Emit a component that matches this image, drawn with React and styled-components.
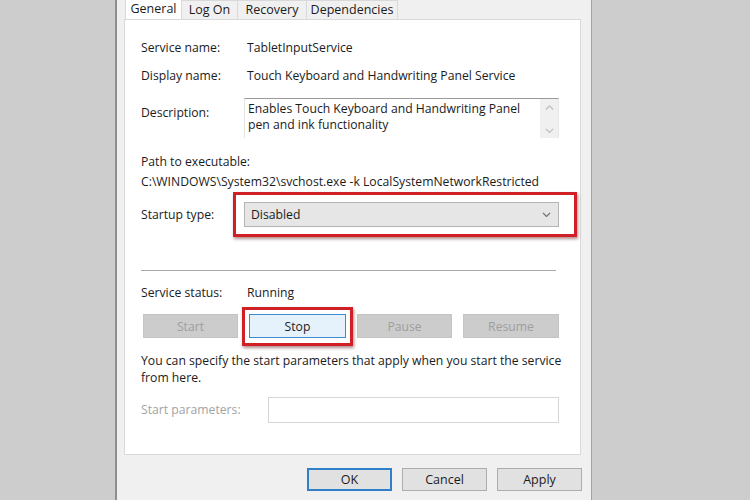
import React from "react";
import styled, { createGlobalStyle } from "styled-components";

const Global = createGlobalStyle`
  html, body { margin: 0; padding: 0; }
  body {
    background: #cdcdcd;
    font-family: "Open Sans", "Noto Sans", "Liberation Sans", sans-serif;
    font-size: 12.2px;
    color: #1b1b1b;
  }
  * { box-sizing: border-box; }
`;

const Page = styled.div`
  width: 750px;
  height: 500px;
  overflow: hidden;
  display: flex;
`;

const Dialog = styled.div`
  margin-left: 115px;
  width: 477px;
  height: 500px;
  background: #f0f0f0;
  border-left: 2px solid #8e8e8e;
  border-right: 1px solid #a2a2a2;
  padding: 0 9px 0 7px;
  display: flex;
  flex-direction: column;
`;

const TabBar = styled.div`
  display: flex;
  height: 20px;
  padding-left: 1px;
  position: relative;
  z-index: 1;
`;

const Tab = styled.div`
  width: ${(p) => p.$w}px;
  height: ${(p) => (p.$active ? 21 : 20)}px;
  margin-top: ${(p) => (p.$active ? -2 : 0)}px;
  padding-top: ${(p) => (p.$active ? 0 : 1)}px;
  background: ${(p) => (p.$active ? "#ffffff" : "#f0f0f0")};
  border: 1px solid #d9d9d9;
  border-bottom: ${(p) => (p.$active ? "none" : "1px solid #d9d9d9")};
  border-left: ${(p) => (p.$first ? "1px solid #d9d9d9" : "none")};
  display: flex;
  align-items: center;
  justify-content: center;
  font-size: 12.5px;
  line-height: 1;
`;

const Panel = styled.div`
  height: 436px;
  margin-top: -1px;
  width: 457px;
  background: #ffffff;
  border: 1px solid #d9d9d9;
  padding: 18px 21px 0 16px;
  display: flex;
  flex-direction: column;
`;

const Row = styled.div`
  display: flex;
  align-items: ${(p) => (p.$top ? "flex-start" : "center")};
  min-height: 20px;
  margin-top: ${(p) => p.$mt || 0}px;
  white-space: nowrap;
`;

const Label = styled.div`
  width: ${(p) => p.$w || 106}px;
  flex: none;
  line-height: 20px;
  margin-top: ${(p) => p.$mt || 0}px;
  color: ${(p) => (p.$disabled ? "#a3a3a3" : "inherit")};
`;

const Value = styled.div`
  line-height: 20px;
`;

const TextBlock = styled.div`
  line-height: ${(p) => p.$lh || 20}px;
  margin-top: ${(p) => p.$mt || 0}px;
  white-space: nowrap;
`;

const DescBox = styled.div`
  width: 316px;
  height: 40px;
  border-top: 1px solid #9a9a9a;
  border-left: 1px solid #e3e3e3;
  border-right: 1px solid #e8e8e8;
  display: flex;
  background: #fff;
`;

const DescText = styled.div`
  flex: 1;
  padding: 2px 0 0 3px;
  line-height: 16px;
  white-space: normal;
`;

const ScrollStrip = styled.div`
  width: 18px;
  background: #f0f0f0;
  display: flex;
  flex-direction: column;
  align-items: center;
  justify-content: space-between;
  padding: 6px 0 5px;
`;

const Combo = styled.div`
  position: relative;
  width: 315px;
  height: 25px;
  background: #e6e6e6;
  border: 1px solid #b4b4b4;
  display: flex;
  align-items: center;
  justify-content: space-between;
  padding: 0 7px 0 6px;
  &::after {
    content: "";
    position: absolute;
    left: -12px;
    right: -19px;
    top: -11px;
    bottom: -11px;
    border: 3px solid #d01f25;
    box-shadow: 1px 2px 3px rgba(80, 0, 0, 0.45);
    pointer-events: none;
  }
`;

const Separator = styled.div`
  width: 415px;
  height: 1px;
  background: #a8a8a8;
  margin-top: 43px;
`;

const ButtonRow = styled.div`
  display: grid;
  grid-template-columns: 95px 97px 95px 96px;
  column-gap: 11px;
  margin-top: 11px;
  margin-left: 2px;
`;

const SvcButton = styled.div`
  position: relative;
  height: 24px;
  display: flex;
  align-items: center;
  justify-content: center;
  background: ${(p) => (p.$active ? "#e5f1fb" : "#cccccc")};
  border: 1px solid ${(p) => (p.$active ? "#3c8bd1" : "#c4c4c4")};
  color: ${(p) => (p.$active ? "#1b1b1b" : "#9e9e9e")};
  ${(p) =>
    p.$active &&
    `
    &::after {
      content: "";
      position: absolute;
      left: -8px; right: -8px; top: -8px; bottom: -9px;
      border: 3px solid #d01f25;
      box-shadow: 1px 2px 3px rgba(80, 0, 0, 0.45);
      pointer-events: none;
    }
  `}
`;

const ParamBox = styled.div`
  width: 292px;
  height: 26px;
  border: 1px solid #d6d6d6;
  background: #fff;
`;

const Footer = styled.div`
  display: flex;
  justify-content: flex-end;
  gap: 10px;
  margin-top: 13px;
`;

const DlgButton = styled.div`
  width: 85px;
  height: 23px;
  display: flex;
  align-items: center;
  justify-content: center;
  background: #e1e1e1;
  border: ${(p) => (p.$default ? "2px solid #2f7fc9" : "1px solid #adadad")};
  font-size: 12.5px;
`;

const Chevron = ({ up, size = 9, color = "#6d6d6d" }) => (
  <svg width={size} height={size * 0.6} viewBox="0 0 10 6">
    <polyline
      points={up ? "1,5 5,1 9,5" : "1,1 5,5 9,1"}
      fill="none"
      stroke={color}
      strokeWidth="1.3"
    />
  </svg>
);

export default function App() {
  return (
    <>
      <Global />
      <Page>
        <Dialog>
          <TabBar>
            <Tab $w={57} $active $first>General</Tab>
            <Tab $w={56}>Log On</Tab>
            <Tab $w={69}>Recovery</Tab>
            <Tab $w={91}>Dependencies</Tab>
          </TabBar>
          <Panel>
            <Row>
              <Label>Service name:</Label>
              <Value>TabletInputService</Value>
            </Row>
            <Row $mt={8}>
              <Label>Display name:</Label>
              <Value>Touch Keyboard and Handwriting Panel Service</Value>
            </Row>
            <Row $mt={12} $top>
              <Label $w={103} $mt={5}>Description:</Label>
              <DescBox>
                <DescText>
                  Enables Touch Keyboard and Handwriting Panel pen and ink functionality
                </DescText>
                <ScrollStrip>
                  <Chevron up color="#bdbdbd" />
                  <Chevron color="#bdbdbd" />
                </ScrollStrip>
              </DescBox>
            </Row>
            <TextBlock $mt={14}>Path to executable:</TextBlock>
            <TextBlock>
              C:\WINDOWS\System32\svchost.exe -k LocalSystemNetworkRestricted
            </TextBlock>
            <Row $mt={10}>
              <Label $w={103}>Startup type:</Label>
              <Combo>
                <span>Disabled</span>
                <Chevron />
              </Combo>
            </Row>
            <Separator />
            <Row $mt={12}>
              <Label>Service status:</Label>
              <Value>Running</Value>
            </Row>
            <ButtonRow>
              <SvcButton>Start</SvcButton>
              <SvcButton $active>Stop</SvcButton>
              <SvcButton>Pause</SvcButton>
              <SvcButton>Resume</SvcButton>
            </ButtonRow>
            <TextBlock $mt={14} $lh={17}>
              You can specify the start parameters that apply when you start the service
              <br />
              from here.
            </TextBlock>
            <Row $mt={11}>
              <Label $w={127} $disabled>Start parameters:</Label>
              <ParamBox />
            </Row>
          </Panel>
          <Footer>
            <DlgButton $default>OK</DlgButton>
            <DlgButton>Cancel</DlgButton>
            <DlgButton>Apply</DlgButton>
          </Footer>
        </Dialog>
      </Page>
    </>
  );
}
